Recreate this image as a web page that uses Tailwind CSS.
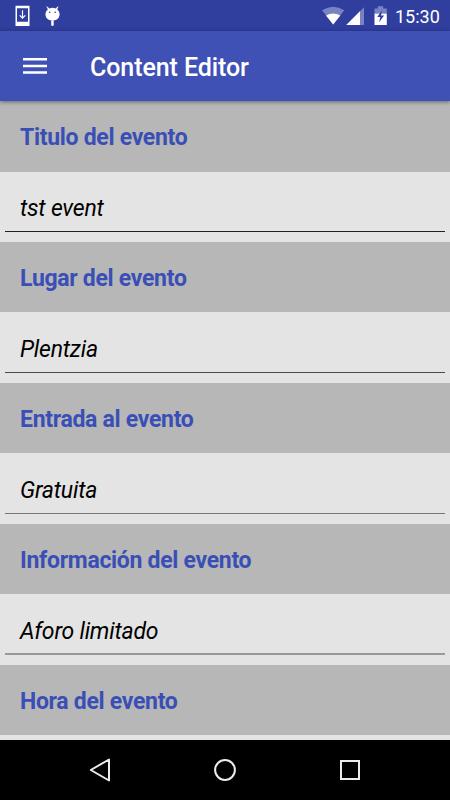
<!DOCTYPE html>
<html lang="es">
<head>
<meta charset="utf-8">
<title>Content Editor</title>
<script src="https://cdn.jsdelivr.net/npm/@tailwindcss/browser@4"></script>
</head>
<body class="w-[450px] h-[800px] overflow-hidden flex flex-col bg-[#e4e4e4] font-['Roboto',sans-serif]">
  <div class="h-[31px] shrink-0 bg-[#303e9d] flex items-center justify-between text-white">
    <div class="flex h-full">
      <svg class="w-[72px] h-[31px]" viewBox="0 0 72 31">
        <path fill="#fff" fill-rule="evenodd" d="M15.500 5.800h14V26h-14zM17 8.300v13.500h11V8.300z"/>
        <path fill="none" stroke="#fff" stroke-width="1.200" d="M22.500 10.300v7.400M19.700 15.400l2.800 2.800 2.800-2.800"/>
        <path fill="#fff" d="M46.800 6.200l2.600 2.200c1.800-.8 4.300-.8 6.100 0l2.600-2.200.4.300-1.300 3c3.400 2.500 3.100 8-.3 10-2.500 1.500-6.200 1.500-8.700 0-3.400-2-3.700-7.500-.3-10l-1.500-3z"/>
        <path fill="#fff" d="M51.200 20.500h2.500v4q0 1.500-1.250 1.500t-1.250-1.500z"/>
        <circle cx="49.700" cy="12.200" r=".8" fill="#303e9d"/><circle cx="55.200" cy="12.200" r=".8" fill="#303e9d"/>
      </svg>
    </div>
    <div class="flex h-full">
      <svg class="w-[75px] h-[31px]" viewBox="320 0 75 31">
        <path fill="#7883c4" d="M322 10.200Q333.200 3.200 344.300 10.200L333.200 24.500z"/>
        <path fill="#fff" d="M326 15.500Q333.200 11.700 340.300 15.500L333.200 24.500z"/>
        <path fill="#7883c4" d="M346.300 25L364 7.200V25z"/>
        <path fill="#fff" d="M346.300 25L360 11.200V25z"/>
        <path fill="#7883c4" d="M374.500 8.500h3.300V6.300h5.400v2.200h3.600V14h-12.300z"/>
        <path fill="#fff" d="M374.500 13.700h12.300V25h-12.300z"/>
        <path fill="#303e9d" d="M381.800 10.500l-4.500 6.500h3l-1.200 5.300 5-6.800h-3z"/>
      </svg>
      <span class="w-[55px] text-[18px] leading-[33px] whitespace-nowrap">15:30</span>
    </div>
  </div>
  <header class="relative z-10 h-[70px] shrink-0 bg-[#3f51b5] flex items-center shadow-[0_1px_4px_rgba(0,0,0,0.45)]">
    <svg class="w-[90px] h-[70px]" viewBox="0 0 90 70"><path stroke="#fff" stroke-width="2.500" d="M23 28.300h24M23 35h24M23 41.500h24"/></svg>
    <h1 class="text-white font-medium text-[25px] leading-[30px] pt-[3px] tracking-[-0.080px] whitespace-nowrap">Content Editor</h1>
  </header>
  <main class="h-[639px] shrink-0 overflow-hidden grid grid-rows-[71px_70px_70px_71px_70px_71px_70px_71px_70px_5px] text-[23px] tracking-[-0.220px] leading-[30px] text-black">
    <h2 class="bg-[#b7b7b7] pl-5 pt-[22px] font-bold tracking-[-0.300px] text-[#3a4fb6]">Titulo del evento</h2>
    <div class="px-[5px] pb-[10px]"><div class="h-full border-b border-[#202020] pl-[15px] pt-[22px] italic">tst event</div></div>
    <h2 class="bg-[#b7b7b7] pl-5 pt-[22px] font-bold tracking-[-0.300px] text-[#3a4fb6]">Lugar del evento</h2>
    <div class="px-[5px] pb-[10px]"><div class="h-full border-b border-[#494949] pl-[15px] pt-[23px] italic">Plentzia</div></div>
    <h2 class="bg-[#b7b7b7] pl-5 pt-[22px] font-bold tracking-[-0.300px] text-[#3a4fb6]">Entrada al evento</h2>
    <div class="px-[5px] pb-[10px]"><div class="h-full border-b border-[#777] pl-[15px] pt-[23px] italic">Gratuita</div></div>
    <h2 class="bg-[#b7b7b7] pl-5 pt-[22px] font-bold tracking-[-0.300px] text-[#3a4fb6]">Información del evento</h2>
    <div class="px-[5px] pb-[10px]"><div class="h-full border-b-2 border-[#999] pl-[15px] pt-[23px] italic">Aforo limitado</div></div>
    <h2 class="bg-[#b7b7b7] pl-5 pt-[22px] font-bold tracking-[-0.300px] text-[#3a4fb6]">Hora del evento</h2>
    <div></div>
  </main>
  <nav class="h-[60px] shrink-0 bg-black flex">
    <svg class="w-[450px] h-[60px]" viewBox="0 0 450 60" fill="none" stroke="#ececec" stroke-width="2">
      <path stroke-linejoin="round" d="M90.800 30L109 19.500V40.500z"/>
      <circle cx="225" cy="30" r="9.900"/>
      <rect x="341" y="21" width="18" height="18"/>
    </svg>
  </nav>
</body>
</html>
